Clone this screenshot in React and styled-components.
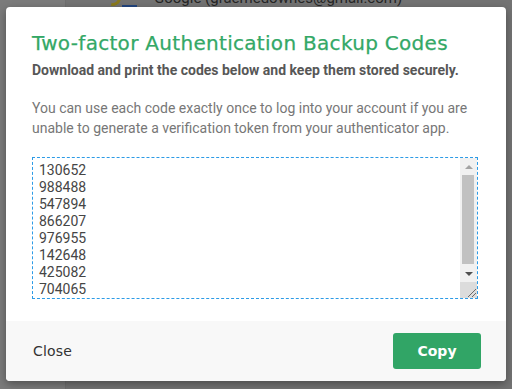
import React from "react";
import styled, { createGlobalStyle } from "styled-components";

const Global = createGlobalStyle`
  html, body { margin: 0; padding: 0; }
  body { width: 512px; height: 389px; overflow: hidden; background: #757575; font-family: Roboto, "Liberation Sans", sans-serif; }
`;

const Page = styled.div`
  position: relative;
  width: 512px;
  height: 389px;
  display: flex;
  background: #737373;
  overflow: hidden;
`;

const Sidebar = styled.div`
  width: 65px;
  background: #7b7b7b;
  border-right: 1px solid #6e6e6e;
`;

const Main = styled.div`
  flex: 1;
  padding-left: 39px;
`;

const Account = styled.div`
  display: flex;
  align-items: flex-start;
  margin-top: -12px;
`;

const Logo = styled.div`
  width: 10px;
  height: 10px;
  margin-top: 2px;
  border-radius: 50%;
  border: 3px solid #a33a22;
  border-right-color: #8a7a1c;
  border-bottom-color: #8a7a1c;
  border-left-color: transparent;
  transform: rotate(-30deg);
`;

const BlueSquare = styled.div`
  width: 15px;
  height: 20px;
  margin: 17px 17px 0 1px;
  background: #22457f;
`;

const AccountText = styled.span`
  font-size: 15px;
  line-height: 20px;
  color: #262626;
`;

const Modal = styled.div`
  position: absolute;
  left: 6px;
  top: 7px;
  width: 500px;
  height: 374px;
  background: #fff;
  border-radius: 4px;
  box-shadow: 0 3px 8px rgba(0,0,0,0.35);
  display: flex;
  flex-direction: column;
  overflow: hidden;
`;

const Body = styled.div`
  flex: 1;
  padding: 23px 29px 0 26px;
  display: flex;
  flex-direction: column;
`;

const Title = styled.h2`
  margin: 0;
  font-family: "DejaVu Sans", sans-serif;
  font-weight: normal;
  font-size: 20px;
  line-height: 26px;
  color: #33a866;
  letter-spacing: 0.3px;
  -webkit-text-stroke: 0.25px #33a866;
`;

const Subtitle = styled.p`
  margin: 4px 0 0;
  font-size: 14px;
  font-weight: bold;
  line-height: 20px;
  color: #575757;
`;

const Text = styled.p`
  margin: 18px 0 0;
  font-size: 14px;
  line-height: 20px;
  color: #777;
`;

const CodesBox = styled.div`
  margin: 19px 0 0;
  width: 446px;
  height: 142px;
  box-sizing: border-box;
  border: 1px dashed #2d9be6;
  display: flex;
`;

const Codes = styled.textarea`
  flex: 1;
  border: none;
  outline: none;
  margin: 0;
  padding: 4px 6px;
  font-family: Roboto, "Liberation Sans", sans-serif;
  font-size: 14px;
  line-height: 17px;
  color: #454545;
  resize: none;
  overflow: hidden;
  background: #fff;
`;

const ScrollBar = styled.div`
  width: 17px;
  display: flex;
  flex-direction: column;
  background: #f1f1f1;
`;

const ArrowButton = styled.div`
  height: 17px;
  display: flex;
  align-items: center;
  justify-content: center;
  padding-left: 1px;
`;

const Track = styled.div`
  flex: 1;
  padding: 0 3px 1px 2px;
  display: flex;
  flex-direction: column;
`;

const Thumb = styled.div`
  height: 89px;
  background: #c1c1c1;
`;

const Resizer = styled.div`
  height: 16px;
  background: #dcdcdc;
  display: flex;
  align-items: flex-end;
  justify-content: flex-end;
`;

const Footer = styled.div`
  height: 60px;
  background: #f8f8f8;
  display: flex;
  align-items: center;
  justify-content: space-between;
  padding: 0 25px 0 27px;
`;

const CloseButton = styled.button`
  background: none;
  border: none;
  padding: 0;
  font-family: "DejaVu Sans", sans-serif;
  font-size: 14px;
  color: #333;
  letter-spacing: 0.2px;
  cursor: pointer;
`;

const CopyButton = styled.button`
  width: 88px;
  height: 36px;
  background: #31a566;
  border: none;
  border-radius: 3px;
  color: #fff;
  font-family: "DejaVu Sans", sans-serif;
  font-weight: bold;
  font-size: 14px;
  cursor: pointer;
`;

const codes = ["130652","988488","547894","866207","976955","142648","425082","704065","318904","550213"];

export default function App() {
  return (
    <>
      <Global />
      <Page>
        <Sidebar />
        <Main>
          <Account>
            <Logo />
            <BlueSquare />
            <AccountText>Google (graemedownes@gmail.com)</AccountText>
          </Account>
        </Main>
        <Modal>
          <Body>
            <Title>Two-factor Authentication Backup Codes</Title>
            <Subtitle>Download and print the codes below and keep them stored securely.</Subtitle>
            <Text>You can use each code exactly once to log into your account if you are unable to generate a verification token from your authenticator app.</Text>
            <CodesBox>
              <Codes readOnly defaultValue={codes.join("\n")} />
              <ScrollBar>
                <ArrowButton>
                  <svg width="8" height="4" viewBox="0 0 8 4"><path d="M0 4 L4 0 L8 4 Z" fill="#a3a3a3" /></svg>
                </ArrowButton>
                <Track><Thumb /></Track>
                <ArrowButton>
                  <svg width="8" height="4" viewBox="0 0 8 4"><path d="M0 0 L8 0 L4 4 Z" fill="#505050" /></svg>
                </ArrowButton>
                <Resizer>
                  <svg width="10" height="10" viewBox="0 0 10 10">
                    <path d="M1 9 L9 1 M5 9 L9 5" stroke="#6a6a6a" strokeWidth="1" fill="none" />
                  </svg>
                </Resizer>
              </ScrollBar>
            </CodesBox>
          </Body>
          <Footer>
            <CloseButton>Close</CloseButton>
            <CopyButton>Copy</CopyButton>
          </Footer>
        </Modal>
      </Page>
    </>
  );
}
